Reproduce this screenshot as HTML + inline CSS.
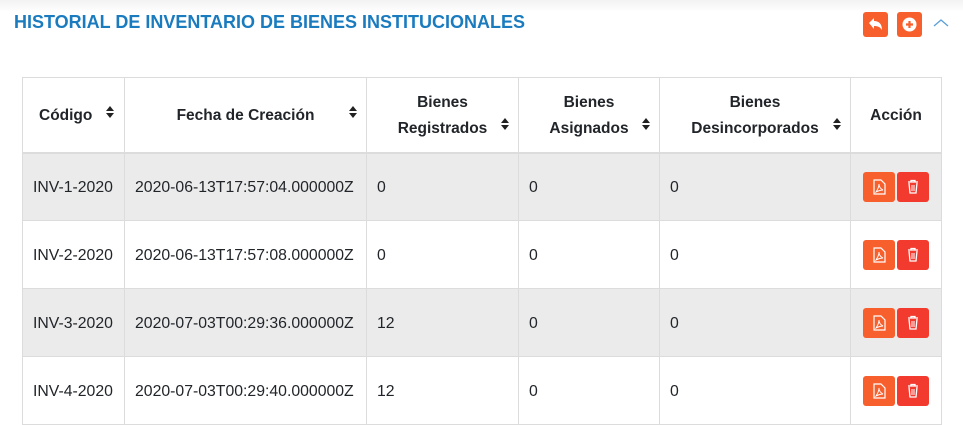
<!DOCTYPE html>
<html><head><meta charset="utf-8"><style>
body{margin:0;width:963px;height:425px;overflow:hidden;background:#fff;font-family:"Liberation Sans",sans-serif;color:#212529;position:relative}
.top{position:absolute;left:0;top:0;width:963px;height:50px;background:linear-gradient(#f2f2f2,#fff 12px)}
h1{position:absolute;left:14px;top:12px;margin:0;font-size:18px;font-weight:bold;color:#1a7bbf}
.hb{position:absolute;top:12px;width:25px;height:25px;background:#f75f2c;border-radius:3px}
table{position:absolute;left:22px;top:77px;border-collapse:collapse;font-size:15.8px;table-layout:fixed}
td,th{border:1px solid #dcdcdc;padding:0 10px;position:relative;white-space:nowrap}
th{height:73px;font-weight:bold;text-align:center;border-bottom:2px solid #dcdcdc;line-height:26px;font-size:15.5px;padding-top:2px;box-sizing:border-box}
td{height:68px;padding-top:2px;box-sizing:border-box}
tr.g td{background:#ebebeb}
.s{position:absolute;right:9px;top:50%;margin-top:-8px;width:8px;height:14px}
.b{display:inline-block;width:32px;height:30px;border-radius:3px;vertical-align:middle;position:relative}
</style></head><body>
<div class="top"></div>
<h1>HISTORIAL DE INVENTARIO DE BIENES INSTITUCIONALES</h1>
<div class="hb" style="left:863px"><svg width="25" height="25" viewBox="0 0 25 25"><path d="M6 11l5-5v3c5 0 8 3 8 9-2-3-4-4-8-4v3z" fill="#fff"/></svg></div>
<div class="hb" style="left:897px"><svg width="25" height="25" viewBox="0 0 25 25"><circle cx="12.5" cy="12.5" r="7" fill="#fff"/><path d="M12.5 9v7M9 12.5h7" stroke="#f75f2c" stroke-width="2.2"/></svg></div>
<svg style="position:absolute;left:933px;top:18px" width="16" height="10"><path d="M1 8l7-6 7 6" fill="none" stroke="#5aa0d8" stroke-width="1.3"/></svg>
<table>
<colgroup><col style="width:102px"><col style="width:242px"><col style="width:152px"><col style="width:141px"><col style="width:191px"><col style="width:91px"></colgroup>
<tr style="height:75px"><th style="text-align:left;padding-left:16px">Código<svg class="s" style="right:10px;margin-top:-10px" viewBox="0 0 8 14"><path d="M0 6l4-5 4 5zM0 8l4 5 4-5z" fill="#222"/></svg></th>
<th>Fecha de Creación<svg class="s" style="margin-top:-10px" viewBox="0 0 8 14"><path d="M0 6l4-5 4 5zM0 8l4 5 4-5z" fill="#222"/></svg></th>
<th>Bienes<br>Registrados<svg class="s" style="margin-top:2px" viewBox="0 0 8 14"><path d="M0 6l4-5 4 5zM0 8l4 5 4-5z" fill="#222"/></svg></th>
<th>Bienes<br>Asignados<svg class="s" style="margin-top:2px" viewBox="0 0 8 14"><path d="M0 6l4-5 4 5zM0 8l4 5 4-5z" fill="#222"/></svg></th>
<th>Bienes<br>Desincorporados<svg class="s" style="margin-top:2px" viewBox="0 0 8 14"><path d="M0 6l4-5 4 5zM0 8l4 5 4-5z" fill="#222"/></svg></th>
<th>Acción</th></tr>
<tr class="g"><td>INV-1-2020</td><td>2020-06-13T17:57:04.000000Z</td><td>0</td><td>0</td><td>0</td><td>B</td></tr>
<tr><td>INV-2-2020</td><td>2020-06-13T17:57:08.000000Z</td><td>0</td><td>0</td><td>0</td><td>B</td></tr>
<tr class="g"><td>INV-3-2020</td><td>2020-07-03T00:29:36.000000Z</td><td>12</td><td>0</td><td>0</td><td>B</td></tr>
<tr><td>INV-4-2020</td><td>2020-07-03T00:29:40.000000Z</td><td>12</td><td>0</td><td>0</td><td>B</td></tr>
</table>
<script>
document.querySelectorAll('td:last-child').forEach(function(t){t.style.padding='0 0 0 12px';t.innerHTML='<span class="b" style="background:#f75f2c"><svg width="32" height="30"><path d="M11 8h7l4 4v10h-11z" fill="none" stroke="#fff" stroke-width="1.2"/><path d="M13 20c2-3 3-6 3-8 0 3 2 5 4 6-3 0-5 1-7 2z" fill="none" stroke="#fff" stroke-width="0.9"/></svg></span> <span class="b" style="background:#f23a2f;margin-left:-2px"><svg width="32" height="30"><path d="M11 10h10M14 10v-1.5h4V10M12 11l1 10h6l1-10" fill="none" stroke="#fff" stroke-width="1.3"/><path d="M15 13v6M17 13v6" stroke="#fff"/></svg></span>';});
</script>
</body></html>
